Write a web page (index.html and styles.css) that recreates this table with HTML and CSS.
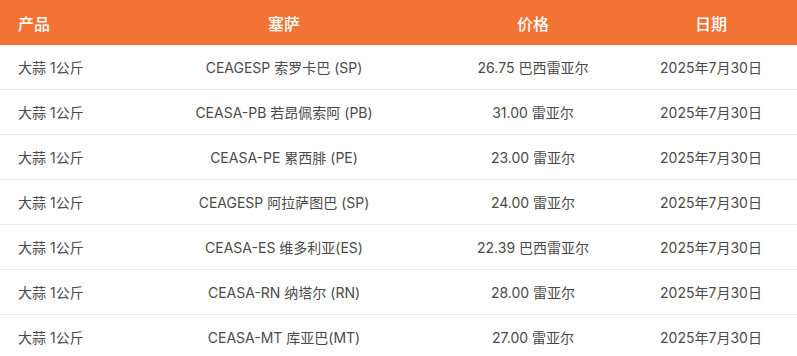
FILE: index.html
```html
<!DOCTYPE html>
<html lang="zh">
<head>
<meta charset="utf-8">
<link rel="stylesheet" href="styles.css">
</head>
<body>
<table class="prices">
  <colgroup>
    <col class="c1"><col class="c2"><col class="c3"><col class="c4">
  </colgroup>
  <thead>
    <tr><th class="left">产品</th><th>塞萨</th><th>价格</th><th>日期</th></tr>
  </thead>
  <tbody>
    <tr><td class="left">大蒜 1公斤</td><td>CEAGESP 索罗卡巴 (SP)</td><td>26.75 巴西雷亚尔</td><td>2025年7月30日</td></tr>
    <tr><td class="left">大蒜 1公斤</td><td>CEASA-PB 若昂佩索阿 (PB)</td><td>31.00 雷亚尔</td><td>2025年7月30日</td></tr>
    <tr><td class="left">大蒜 1公斤</td><td>CEASA-PE 累西腓 (PE)</td><td>23.00 雷亚尔</td><td>2025年7月30日</td></tr>
    <tr><td class="left">大蒜 1公斤</td><td>CEAGESP 阿拉萨图巴 (SP)</td><td>24.00 雷亚尔</td><td>2025年7月30日</td></tr>
    <tr><td class="left">大蒜 1公斤</td><td>CEASA-ES 维多利亚(ES)</td><td>22.39 巴西雷亚尔</td><td>2025年7月30日</td></tr>
    <tr><td class="left">大蒜 1公斤</td><td>CEASA-RN 纳塔尔 (RN)</td><td>28.00 雷亚尔</td><td>2025年7月30日</td></tr>
    <tr><td class="left">大蒜 1公斤</td><td>CEASA-MT 库亚巴(MT)</td><td>27.00 雷亚尔</td><td>2025年7月30日</td></tr>
  </tbody>
</table>
</body>
</html>
```
FILE: styles.css
```css
html, body {
  margin: 0;
  padding: 0;
  background: #fff;
}
body {
  font-family: Inter, "Noto Sans CJK SC", sans-serif;
  font-size: 14px;
  color: #4a4a4a;
}
.prices {
  width: 797px;
  border-collapse: collapse;
  table-layout: fixed;
}
.c1 { width: 127px; }
.c2 { width: 314px; }
.c3 { width: 184px; }
.c4 { width: 172px; }
.prices th {
  background: #f37335;
  color: #fff;
  font-weight: 500;
  font-size: 16px;
  height: 45px;
  padding: 0;
  text-align: center;
  vertical-align: middle;
}
.prices td {
  height: 44px;
  padding: 0;
  text-align: center;
  vertical-align: middle;
  border-bottom: 1px solid #ebebeb;
  white-space: nowrap;
}
.prices .left {
  text-align: left;
  padding-left: 18px;
}
```
